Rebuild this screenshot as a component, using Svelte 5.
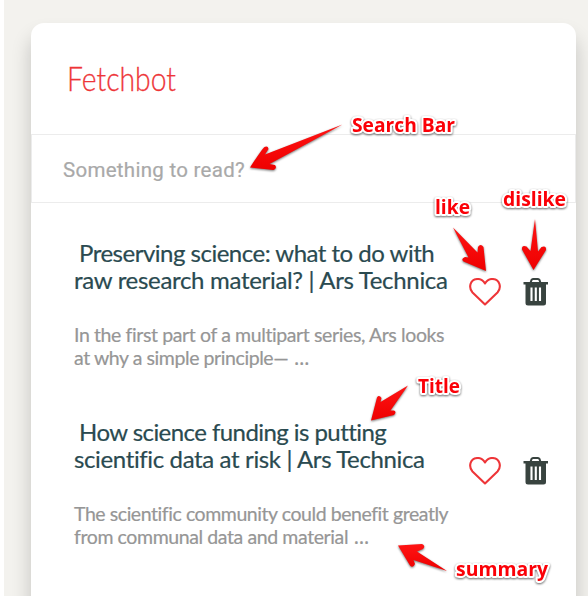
<script>
  const articles = [
    {
      title: [
        { text: 'Preserving science: what to do with', tracking: -0.5 },
        { text: 'raw research material? | Ars Technica', tracking: -0.31 }
      ],
      summary: [
        { text: 'In the first part of a multipart series, Ars looks', tracking: -0.39 },
        { text: 'at why a simple principle— ', tracking: -0.42, more: true }
      ]
    },
    {
      title: [
        { text: 'How science funding is putting', tracking: -0.56 },
        { text: 'scientific data at risk | Ars Technica', tracking: -0.37 }
      ],
      summary: [
        { text: 'The scientific community could benefit greatly', tracking: -0.44 },
        { text: 'from communal data and material ', tracking: -0.4, more: true }
      ]
    }
  ];

  const labels = [
    { text: 'Search Bar', x: 352, y: 132, width: 103 },
    { text: 'like', x: 435, y: 214, width: 35 },
    { text: 'dislike', x: 503, y: 206, width: 63 },
    { text: 'Title', x: 418, y: 393, width: 42 },
    { text: 'summary', x: 456, y: 576, width: 92 }
  ];

  const arrows = [
    'M342.5 124.500 L265 154.500 L268.500 149 Q268 145.500 264.500 147 Q262 149 250 167.500 L273.500 170 Q277.500 168 275 165 L269.500 164 Z',
    'M453 227.500 L468.500 257.500 L465 257 Q460.500 259 463.500 261.500 L486 271 L483.500 247 Q480.500 243 478 247 L477.500 252.500 Z',
    'M535 219 L530.500 251 L526.500 246.500 Q521.500 244.500 522 249.500 L533.500 270 L546 250 Q546.500 245 541.500 247 L538 251.500 Z',
    'M408 385.500 L380.500 402 L381.500 398 Q379 394.500 377 397.500 L371 420.500 L394 415 Q397 412 394 410.500 L390.500 410.500 Z',
    'M447 571 L413.500 560 L415 564 Q413 568.500 410 565.500 L398 545.500 L422 544 Q426 546 423 549 L417 551.500 Z'
  ];
</script>

{#snippet trash()}
  <svg width="26" height="28" viewBox="0 0 26 28">
    <path d="M7.5 5 L8.500 2 Q9 1 10 1 H15 Q16 1 16.500 2 L17.500 5" fill="none" stroke="#38433f" stroke-width="2" />
    <path d="M0.500 4 H25 V6.500 H23 V25 Q23 27.500 20.500 27.500 H5 Q2.500 27.500 2.500 25 V6.500 H0.500 Z" fill="#38433f" />
    <path d="M8.500 9.500 V23 M12.800 9.500 V23 M17 9.500 V23" stroke="#fff" stroke-width="2.100" />
  </svg>
{/snippet}

{#snippet heart()}
  <svg width="32" height="28" viewBox="0 0 32 28">
    <path d="M16 26.500 L3.500 14.500 C-0.500 10 0.500 1 9 1 C12 1 14.500 3 16 5.500 C17.500 3 20 1 23 1 C31.500 1 32.500 10 28.500 14.500 Z" fill="none" stroke="#ee3538" stroke-width="2.100" stroke-linejoin="round" />
  </svg>
{/snippet}

<main>
  <section class="card">
    <header>
      <svg class="logo" width="120" height="40" viewBox="0 0 120 40" aria-label="Fetchbot">
        <text x="-2" y="28" textLength="109" lengthAdjust="spacingAndGlyphs">Fetchbot</text>
      </svg>
    </header>
    <div class="search">Something to read?</div>
    <div class="list">
      {#each articles as article}
        <article>
          <div class="copy">
            <h2>{#each article.title as line, i}<span class="line" class:first={i === 0} style:letter-spacing="{line.tracking}px">{line.text}</span>{/each}</h2>
            <p>{#each article.summary as line}<span class="line" style:letter-spacing="{line.tracking}px">{line.text}{#if line.more}<span class="more">…</span>{/if}</span>{/each}</p>
          </div>
          <div class="actions">
            {@render heart()}
            {@render trash()}
          </div>
        </article>
      {/each}
    </div>
  </section>
  <svg class="notes" width="588" height="602" viewBox="0 0 588 602">
    <defs>
      <linearGradient id="red" x1="0" y1="0" x2="0" y2="1">
        <stop offset="0" stop-color="#ff1414" />
        <stop offset="1" stop-color="#ee0000" />
      </linearGradient>
    </defs>
    {#each arrows as d}
      <path class="arrow" {d} />
    {/each}
    {#each labels as label}
      <text class="label" x={label.x} y={label.y} textLength={label.width} lengthAdjust="spacingAndGlyphs">{label.text}</text>
    {/each}
  </svg>
</main>

<style>
  :global(body) { background: #fff; }
  main {
    position: relative;
    box-sizing: border-box;
    width: 588px;
    height: 596px;
    padding: 23px 12px 0 27px;
    border-left: 4px solid #fff;
    background: #f3f2ee;
    background-clip: padding-box;
    overflow: hidden;
    font-family: Lato, sans-serif;
  }
  .card {
    height: 640px;
    background: #fff;
    border-radius: 13px;
    box-shadow: 0 14px 20px rgba(0, 0, 0, 0.2);
  }
  header {
    box-sizing: border-box;
    height: 111px;
    padding: 40px 0 0 38px;
  }
  .logo { display: block; overflow: visible; }
  .logo text {
    font: 300 34px Lato, sans-serif;
    fill: #ee3538;
    stroke: #ee3538;
    stroke-width: 0.3px;
  }
  .search {
    box-sizing: border-box;
    height: 69px;
    padding-left: 31px;
    border: 1px solid #ececec;
    font: 20.5px/70px Roboto, sans-serif;
    letter-spacing: 0.28px;
    color: #a9a9a9;
    -webkit-text-stroke: 0.2px #a9a9a9;
  }
  .list { padding: 36px 0 0 43px; }
  article { display: flex; height: 179px; }
  .copy { width: 395px; }
  h2, p { margin: 0; font-weight: 400; }
  .line { display: block; white-space: nowrap; }
  h2 {
    font-size: 24px;
    line-height: 27px;
    color: #2a4a50;
    -webkit-text-stroke: 0.2px #2a4a50;
  }
  .first { padding-left: 5px; }
  p {
    margin-top: 31px;
    font-size: 19.5px;
    line-height: 22.5px;
    color: #969696;
    -webkit-text-stroke: 0.2px #969696;
  }
  .more { font-family: 'Noto Sans', sans-serif; line-height: 1; letter-spacing: 0; margin-left: 1px; }
  .actions { display: flex; gap: 22px; padding-top: 39px; }
  .notes { position: absolute; left: -4px; top: 0; overflow: visible; }
  .arrow { fill: url(#red); filter: drop-shadow(0 1px 1px rgba(0, 0, 0, 0.55)); }
  .label {
    font: 700 19px 'Open Sans', 'Noto Sans', sans-serif;
    fill: #fb0007;
    stroke: #fff;
    stroke-width: 4px;
    stroke-linejoin: round;
    paint-order: stroke;
    filter: drop-shadow(0 1px 1px rgba(0, 0, 0, 0.6));
  }
</style>
